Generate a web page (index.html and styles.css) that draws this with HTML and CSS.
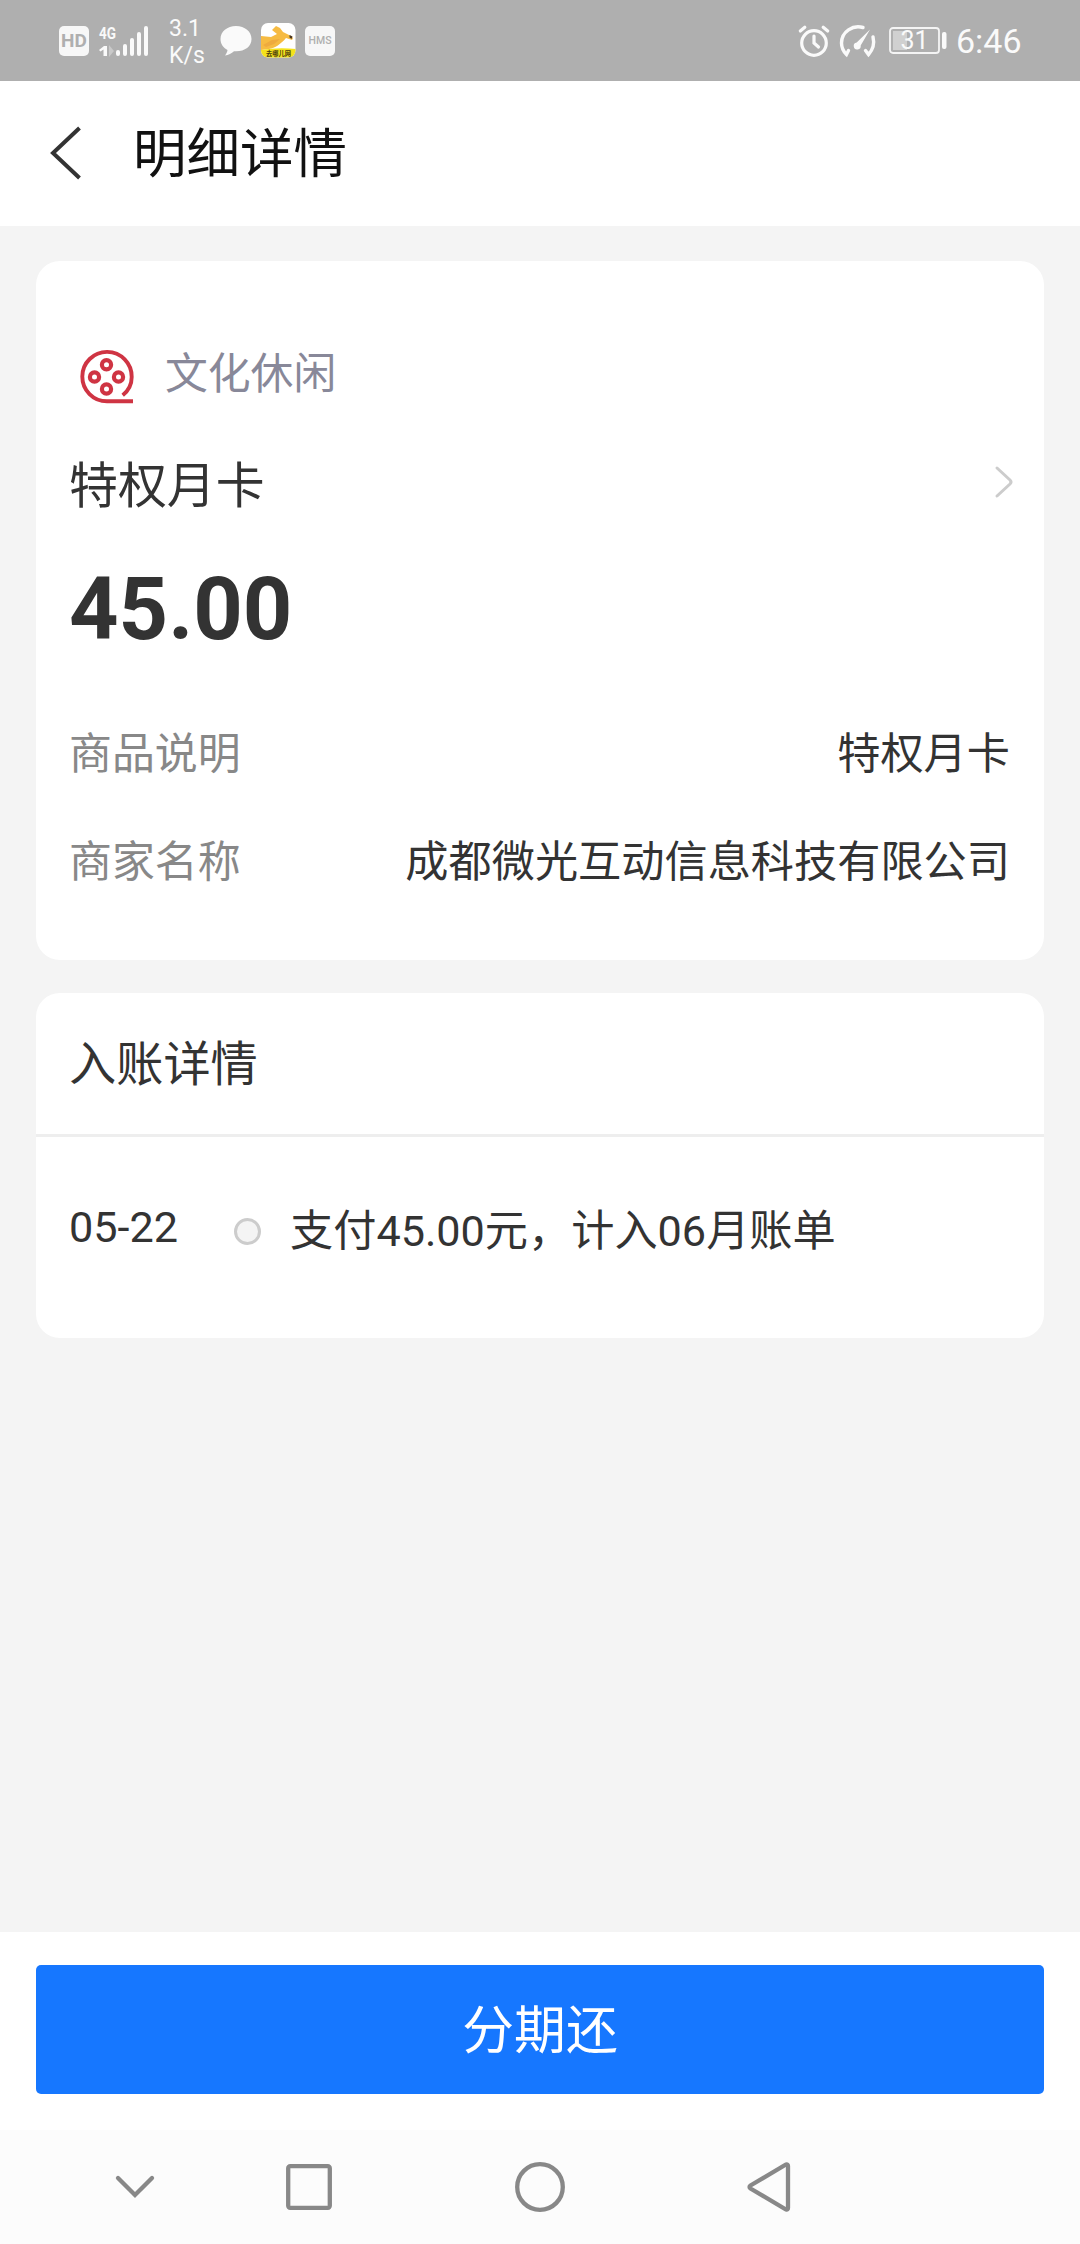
FILE: index.html
```html
<!DOCTYPE html>
<html lang="zh-CN">
<head>
<meta charset="utf-8">
<title>明细详情</title>
<link rel="stylesheet" href="styles.css">
</head>
<body>
<div class="screen">
  <div class="status-bar">
    <div class="status-left">
      <span class="badge badge-hd">HD</span>
      <svg class="signal" width="50" height="32" viewBox="0 0 50 32" fill="#fafafa">
        <text class="signal-net" x="0" y="13.500" textLength="17" lengthAdjust="spacingAndGlyphs">4G</text>
        <path d="M0 25l5-4h3v10H4.500v-6.500l-3 2z"/>
        <path d="M10 20l5 6-5 6z" opacity=".35"/>
        <rect x="17" y="25" width="4" height="6" rx="2"/>
        <rect x="24" y="19" width="4" height="12" rx="2"/>
        <rect x="31" y="13" width="4" height="18" rx="2"/>
        <rect x="38" y="7" width="4" height="24" rx="2"/>
        <rect x="45" y="1" width="4" height="30" rx="2"/>
      </svg>
      <span class="speed">3.1<br>K/s</span>
      <svg class="bubble" width="32" height="32" viewBox="0 0 32 32"><path d="M16 1C7.200 1 .5 6.500.5 14c0 4.800 2.700 8.700 7 11-.2 2-1.200 3.800-2.500 5.500 3.500-.4 6.500-2 9-4.300C24 27 31.500 22 31.500 14 31.500 6.500 24.800 1 16 1z" fill="#fafafa"/></svg>
      <svg class="app" width="35" height="35" viewBox="0 0 35 35">
        <defs><clipPath id="app-clip"><rect width="34.500" height="34.500" rx="7"/></clipPath></defs>
        <g clip-path="url(#app-clip)">
          <rect width="35" height="35" fill="#fff"/>
          <path d="M0 13l10 1 6-3-5-4 4-4 4 2 3 4 8 4 2 2-1 2-6-2c-5 6-11 10-17 11l-8 1z" fill="#f6bb42"/>
          <path d="M2 22l9-5 8-1-6 5-8 3z" fill="#eeaa3e"/>
          <path d="M28.500 12l3 1.500-1 2.500-2-1.500z" fill="#4a3620"/>
          <path d="M0 27q17-3 35-1v9H0z" fill="#f4e21c"/>
        </g>
        <text class="app-name" x="5" y="32.500" textLength="25" lengthAdjust="spacingAndGlyphs">去哪儿网</text>
      </svg>
      <span class="badge badge-hms">HMS</span>
    </div>
    <div class="status-right">
      <svg class="alarm" width="32" height="32" viewBox="0 0 32 32" fill="none" stroke="#fafafa" stroke-width="3.200" stroke-linecap="round">
        <circle cx="16" cy="18" r="12.300"/><path d="M16 11v7l4.500 4M2.300 6l4.500-3.700M29.700 6l-4.500-3.700"/>
      </svg>
      <svg class="gauge" width="38" height="34" viewBox="0 0 38 34" fill="none" stroke="#fafafa" stroke-width="3.400" stroke-linecap="round">
        <path d="M24 3.500C14 .5 2.500 7.500 2.500 19c0 4.500 1.500 8 5 11.500l2-4M34 13c1.500 6 .5 12-4.500 17.500l-3-4"/>
        <path d="M31 5.500L21.700 21.500a3.500 3.500 0 1 1-4-3z" fill="#fafafa" stroke="none"/>
      </svg>
      <svg class="battery" width="58" height="28" viewBox="0 0 58 28">
        <rect x="1" y="1" width="49" height="25" rx="3" fill="none" stroke="#f4f4f4" stroke-width="1.800"/>
        <rect x="4" y="4" width="14" height="19" fill="#d0d0d0"/>
        <rect x="53" y="5" width="4.500" height="17" rx="2" fill="#fafafa"/>
        <text class="battery-level" x="25.500" y="22" text-anchor="middle">31</text>
      </svg>
      <span class="clock">6:46</span>
    </div>
  </div>

  <header class="title-bar">
    <svg class="back" width="34" height="54" viewBox="0 0 34 54"><path d="M30.500 2L4 27l26.500 25" fill="none" stroke="#333" stroke-width="4"/></svg>
    <h1 class="title">明细详情</h1>
  </header>

  <main class="content">
    <section class="card summary">
      <div class="category">
        <svg class="film" width="54" height="54" viewBox="0 0 54 54" fill="none" stroke="#cf3443">
          <path d="M53 51.300H27A24.700 24.700 0 1 1 51.700 27c0 7.500-3 13.500-9 18.300" stroke-width="3.900"/>
          <g stroke-width="4.200"><circle cx="26.500" cy="14.800" r="4.600"/><circle cx="14.500" cy="27" r="4.600"/><circle cx="38.500" cy="27" r="4.600"/><circle cx="26.500" cy="39" r="4.600"/></g>
        </svg>
        <span class="category-name">文化休闲</span>
      </div>
      <div class="product">
        <span>特权月卡</span>
        <svg class="more" width="18" height="32" viewBox="0 0 18 32"><path d="M2 2l13 12q2 2 0 4L2 30" fill="none" stroke="#ccc" stroke-width="3" stroke-linecap="round"/></svg>
      </div>
      <div class="amount">45.00</div>
      <div class="row"><span class="label">商品说明</span><span>特权月卡</span></div>
      <div class="row"><span class="label">商家名称</span><span>成都微光互动信息科技有限公司</span></div>
    </section>

    <section class="card entry">
      <h2 class="entry-title">入账详情</h2>
      <div class="entry-row">
        <span class="date">05-22</span>
        <span class="dot"></span>
        <span class="desc">支付45.00元，计入06月账单</span>
      </div>
    </section>
  </main>

  <footer class="action"><button class="pay-button">分期还</button></footer>

  <nav class="nav-bar">
    <svg class="nav-hide" width="40" height="24" viewBox="0 0 40 24"><path d="M3 3l17 17L37 3"/></svg>
    <svg class="nav-recent" width="46" height="46" viewBox="0 0 46 46"><rect x="2.200" y="2.200" width="41.600" height="41.600" rx="2"/></svg>
    <svg class="nav-home" width="50" height="50" viewBox="0 0 50 50"><circle cx="25" cy="25" r="22.800"/></svg>
    <svg class="nav-back" width="44" height="50" viewBox="0 0 44 50"><path d="M39 2.500q2-.5 2 1.500v42q0 2-2 1.500L3.500 26.500q-2-1.500 0-3z"/></svg>
  </nav>
</div>
</body>
</html>
```
FILE: styles.css
```css
* { box-sizing: border-box; }
body {
  margin: 0;
  background: #f4f4f4;
  color: #333;
  font-family: Roboto, "Noto Sans CJK SC", sans-serif;
  font-size: 43.2px;
}
svg { display: block; flex: none; overflow: visible; }
h1, h2 { margin: 0; font-weight: 400; }

.screen {
  width: 1080px;
  height: 2244px;
  display: flex;
  flex-direction: column;
  overflow: hidden;
}

/* status bar */
.status-bar {
  height: 81px;
  flex: none;
  display: flex;
  justify-content: space-between;
  background: #afafaf;
  color: #fafafa;
}
.status-left, .status-right { display: flex; align-items: center; }
.status-left { padding-left: 59px; }
.status-right { padding-right: 59px; }
.badge {
  width: 30px;
  height: 30px;
  border-radius: 5px;
  background: #f7f7f7;
  color: #afafaf;
  display: flex;
  align-items: center;
  justify-content: center;
}
.badge-hd { font-size: 19px; font-weight: 700; }
.badge-hms { margin-left: 9px; font-size: 10.500px; font-weight: 500; }
.signal { margin-left: 10px; }
.signal-net { font-size: 17px; font-weight: 700; }
.speed { margin-left: 20px; width: 37px; padding-top: 4px; font-size: 23px; line-height: 26.500px; }
.bubble { margin-left: 14px; }
.app { margin-left: 9px; }
.app-name { font-size: 6.500px; font-weight: 700; fill: #4a3c10; }
.gauge { margin-left: 9px; }
.battery { margin-left: 12px; }
.battery-level { font-size: 25px; fill: #fafafa; }
.clock { margin-left: 9px; width: 65px; font-size: 34px; line-height: 40px; white-space: nowrap; }

/* title bar */
.title-bar {
  height: 145px;
  flex: none;
  display: flex;
  align-items: center;
  padding: 0 0 2px 49px;
  background: #fff;
}
.title { margin-left: 50px; padding-top: 4px; font-size: 53.500px; line-height: 80px; color: #111; }

/* cards */
.content {
  flex: 1;
  display: flex;
  flex-direction: column;
  gap: 33px;
  padding: 35px 36px 0;
}
.card { border-radius: 24px; background: #fff; }
.summary { height: 699px; padding: 81px 34px 0 33px; }
.category { display: flex; align-items: center; height: 60px; padding: 10px 0 0 11px; }
.category-name { margin: -6px 0 0 31px; color: #888899; font-size: 42.800px; line-height: 60px; }
.product {
  display: flex;
  align-items: center;
  justify-content: space-between;
  height: 80px;
  margin: 39px -3px 0 0;
  font-size: 48.900px;
}
.more { margin-top: 1px; }
.amount { margin-top: 39px; font-size: 86.400px; font-weight: 700; line-height: 100px; }
.row {
  display: flex;
  align-items: center;
  justify-content: space-between;
  height: 108px;
}
.amount + .row { margin-top: 36px; }
.label { color: #888; font-size: 42.900px; }

.entry { height: 345px; }
.entry-title {
  height: 144px;
  padding: 2px 0 0 33px;
  border-bottom: 3px solid #eee;
  font-size: 47.200px;
  line-height: 141px;
}
.entry-row { display: flex; align-items: center; height: 188px; padding-left: 33px; }
.date { width: 165px; margin-top: -8px; }
.dot { width: 27px; height: 27px; border: 3px solid #ccc; border-radius: 50%; background: #f4f4f4; }
.desc { margin: -8px 0 0 29px; }

/* bottom action */
.action { height: 198px; flex: none; padding: 33px 36px; background: #fff; }
.pay-button {
  display: block;
  width: 100%;
  height: 129px;
  border: 0;
  border-radius: 5px;
  background: #1677ff;
  color: #fff;
  padding: 5px 0 0;
  font: 51.800px/124px Roboto, "Noto Sans CJK SC", sans-serif;
}

/* system navigation */
.nav-bar {
  height: 114px;
  flex: none;
  display: flex;
  align-items: center;
  padding-left: 115px;
  background: #fcfcfc;
}
.nav-bar svg { fill: none; stroke: #888; stroke-width: 4.300; stroke-linecap: round; }
.nav-recent { margin-left: 131px; }
.nav-home { margin-left: 183px; }
.nav-back { margin-left: 182px; }
```
